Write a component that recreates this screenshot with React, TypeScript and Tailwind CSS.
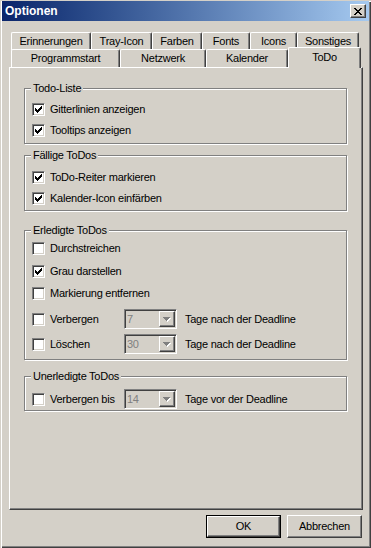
import React from 'react';

const raised =
  'border border-t-white border-l-white border-r-[#404040] border-b-[#404040] shadow-[inset_-1px_-1px_0_#808080]';

const ROW1 = [
  { label: 'Erinnerungen', w: 'w-[80px]' },
  { label: 'Tray-Icon', w: 'w-[61px]' },
  { label: 'Farben', w: 'w-[50px]' },
  { label: 'Fonts', w: 'w-[48px]' },
  { label: 'Icons', w: 'w-[47px]' },
  { label: 'Sonstiges', w: 'w-[62px]' },
];

const ROW2 = [
  { label: 'Programmstart', w: 'w-[109px]' },
  { label: 'Netzwerk', w: 'w-[86px]' },
  { label: 'Kalender', w: 'w-[82px]' },
];

const CheckMark = () => (
  <svg width="7" height="7" viewBox="0 0 7 7" shapeRendering="crispEdges" className="block">
    <path
      d="M6 0h1v1H6zM5 1h2v1H5zM0 2h1v1H0zM4 2h3v1H4zM0 3h2v1H0zM3 3h3v1H3zM0 4h5v1H0zM1 5h3v1H1zM2 6h1v1H2z"
      fill="#000"
    />
  </svg>
);

const Arrow = () => (
  <svg width="8" height="5" viewBox="0 0 8 5" shapeRendering="crispEdges" className="block">
    <path d="M1 1h7v1H1zM2 2h5v1H2zM3 3h3v1H3zM4 4h1v1H4z" fill="#fff" />
    <path d="M0 0h7v1H0zM1 1h5v1H1zM2 2h3v1H2zM3 3h1v1H3z" fill="#808080" />
  </svg>
);

const CloseX = () => (
  <svg width="8" height="7" viewBox="0 0 8 7" shapeRendering="crispEdges" className="block">
    <path
      d="M0 0h2v1H0zM6 0h2v1H6zM1 1h2v1H1zM5 1h2v1H5zM2 2h4v1H2zM3 3h2v1H3zM2 4h4v1H2zM1 5h2v1H1zM5 5h2v1H5zM0 6h2v1H0zM6 6h2v1H6z"
      fill="#000"
    />
  </svg>
);

const Box = ({ checked }: { checked?: boolean }) => (
  <span className="flex items-center justify-center w-[13px] h-[13px] shrink-0 bg-white border border-t-[#808080] border-l-[#808080] border-r-white border-b-white shadow-[inset_1px_1px_0_#404040,inset_-1px_-1px_0_#d4d0c8]">
    {checked && <CheckMark />}
  </span>
);

const Check = ({ label, checked, className = '' }: { label: string; checked?: boolean; className?: string }) => (
  <div className={`flex items-center h-[21px] ${className}`}>
    <Box checked={checked} />
    <span className="ml-[5px]">{label}</span>
  </div>
);

const Combo = ({ value }: { value: string }) => (
  <div className="flex w-[53px] h-[20px] p-[1px] bg-[#d4d0c8] border border-t-[#808080] border-l-[#808080] border-r-white border-b-white shadow-[inset_1px_1px_0_#404040,inset_-1px_-1px_0_#d4d0c8]">
    <span className="flex-1 pl-[1px] leading-[16px] text-[#808080]">{value}</span>
    <span className={`flex items-center justify-center w-[16px] h-full ${raised}`}>
      <Arrow />
    </span>
  </div>
);

const DaysRow = ({ label, value, suffix, className = '' }: { label: string; value: string; suffix: string; className?: string }) => (
  <div className={`flex items-center h-[20px] ${className}`}>
    <div className="flex items-center w-[92px]">
      <Box />
      <span className="ml-[5px]">{label}</span>
    </div>
    <Combo value={value} />
    <span className="ml-[8px]">{suffix}</span>
  </div>
);

const Group = ({ title, className, children }: { title: string; className: string; children: React.ReactNode }) => (
  <div className={`relative w-[323px] pl-[7px] border border-[#808080] shadow-[inset_1px_1px_0_#fff,1px_1px_0_#fff] ${className}`}>
    <span className="absolute -top-[7px] left-[6px] px-[2px] bg-[#d4d0c8] leading-[13px]">{title}</span>
    {children}
  </div>
);

export default function App() {
  return (
    <div className="relative w-[371px] h-[548px] overflow-hidden bg-[#d4d0c8] text-[11px] leading-[13px] text-black font-['Liberation_Sans',Arial,sans-serif] tracking-[-0.25px] shadow-[inset_1px_1px_0_#d4d0c8,inset_2px_2px_0_#fff,inset_-1px_-1px_0_#404040,inset_-2px_-2px_0_#808080]">
      {/* title bar */}
      <div className="flex items-center mt-[1px] mx-[2px] h-[20px] pl-[3px] pr-[3px] bg-gradient-to-r from-[#0a246a] to-[#a6caf0]">
        <span className="flex-1 text-[12px] font-bold text-white tracking-normal">Optionen</span>
        <button className={`flex items-center justify-center w-[16px] h-[14px] bg-[#d4d0c8] ${raised}`}>
          <CloseX />
        </button>
      </div>

      {/* tab control */}
      <div className="ml-[9px] mt-[11px] w-[354px]">
        <div className="flex pl-[2px] h-[18px]">
          {ROW1.map((t) => (
            <div
              key={t.label}
              className={`${t.w} h-[18px] flex items-center justify-center bg-[#d4d0c8] rounded-t-[2px] border-t border-l border-r border-t-white border-l-white border-r-[#404040] shadow-[inset_-1px_0_0_#808080]`}
            >
              {t.label}
            </div>
          ))}
        </div>
        <div className="relative flex items-end pl-[2px] h-[18px] -mt-[1px]">
          {ROW2.map((t) => (
            <div
              key={t.label}
              className={`${t.w} h-[18px] flex items-center justify-center bg-[#d4d0c8] rounded-t-[2px] border-t border-l border-r border-t-white border-l-white border-r-[#404040] shadow-[inset_-1px_0_0_#808080]`}
            >
              {t.label}
            </div>
          ))}
          <div className="relative z-10 w-[73px] h-[21px] -mb-[1px] pb-[2px] flex items-center justify-center bg-[#d4d0c8] rounded-t-[2px] border-t border-l border-r border-t-white border-l-white border-r-[#404040] shadow-[inset_-1px_0_0_#808080]">
            ToDo
          </div>
        </div>

        <div className={`h-[443px] pl-[14px] pt-[20px] ${raised}`}>
          <Group title="Todo-Liste" className="h-[56px] pt-[10px]">
            <Check label="Gitterlinien anzeigen" checked />
            <Check label="Tooltips anzeigen" checked />
          </Group>

          <Group title="Fällige ToDos" className="h-[56px] pt-[11px] mt-[11px]">
            <Check label="ToDo-Reiter markieren" checked />
            <Check label="Kalender-Icon einfärben" checked />
          </Group>

          <Group title="Erledigte ToDos" className="h-[130px] pt-[7px] mt-[19px]">
            <Check label="Durchstreichen" />
            <Check label="Grau darstellen" checked className="mt-[2px]" />
            <Check label="Markierung entfernen" className="mt-[1px]" />
            <DaysRow label="Verbergen" value="7" suffix="Tage nach der Deadline" className="mt-[5px]" />
            <DaysRow label="Löschen" value="30" suffix="Tage nach der Deadline" className="mt-[5px]" />
          </Group>

          <Group title="Unerledigte ToDos" className="h-[35px] pt-[12px] mt-[16px]">
            <DaysRow label="Verbergen bis" value="14" suffix="Tage vor der Deadline" />
          </Group>
        </div>
      </div>

      {/* buttons */}
      <div className="flex justify-end gap-[6px] mt-[5px] pr-[9px]">
        <button className="w-[75px] h-[23px] border border-black bg-[#d4d0c8]">
          <span className={`flex items-center justify-center w-full h-full ${raised}`}>OK</span>
        </button>
        <button className={`flex items-center justify-center w-[75px] h-[23px] bg-[#d4d0c8] ${raised}`}>
          Abbrechen
        </button>
      </div>
    </div>
  );
}
